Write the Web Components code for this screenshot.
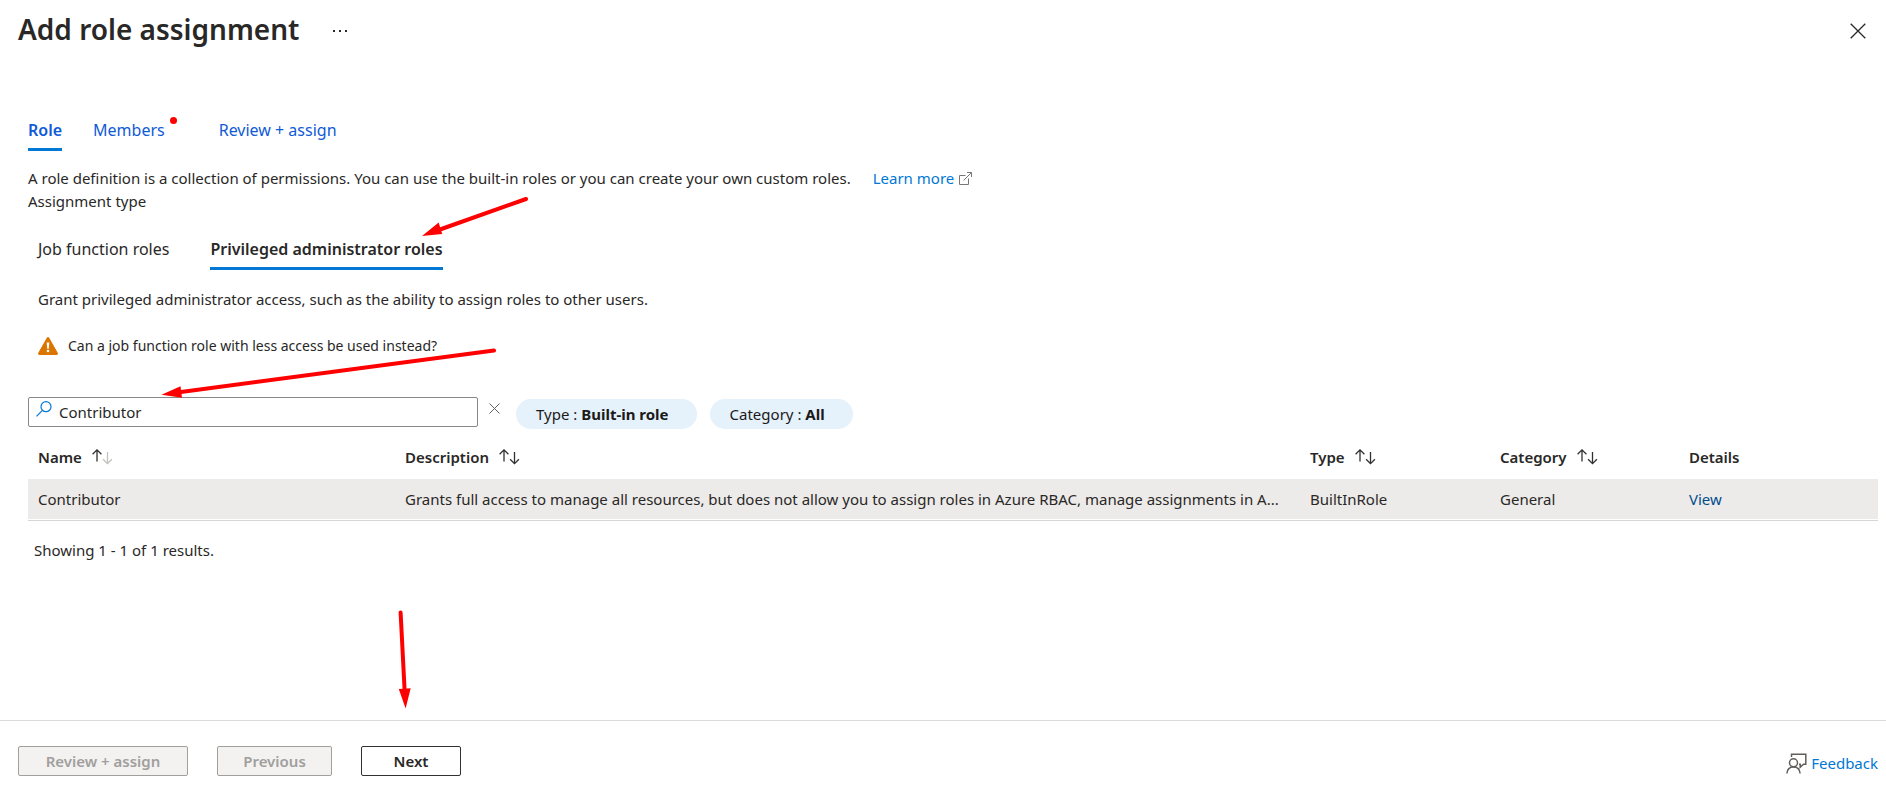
<!DOCTYPE html>
<html lang="en">
<head>
<meta charset="utf-8">
<title>Add role assignment</title>
<style>
  body { margin: 0; background: #fff; color: #292827; font: 15px/23px "Noto Sans", "Open Sans", sans-serif; }
</style>
</head>
<body>
<role-page></role-page>
<script>
const define = (name, html, setup) => {
  const template = document.createElement('template');
  template.innerHTML = html;
  customElements.define(name, class extends HTMLElement {
    connectedCallback() {
      if (this.shadowRoot) return;
      const root = this.attachShadow({ mode: 'open' });
      root.append(template.content.cloneNode(true));
      if (setup) setup(this, root);
    }
  });
};

define('page-header', `
  <style>
    :host { display: flex; align-items: center; height: 58px; padding: 0 20px 0 18px; }
    h1 { margin: 0; font-size: 28px; line-height: 40px; font-weight: 600; }
    button { display: flex; align-items: center; justify-content: center; padding: 4px 0 0; border: 0; background: none; color: inherit; }
    .more { margin-left: 32px; }
    .close { margin-left: auto; }
  </style>
  <h1><slot></slot></h1>
  <button class="more" type="button" aria-label="More options">
    <svg width="18" height="4" fill="currentColor"><path d="M2 1h2v2h-2zM8 1h2v2h-2zM14 1h2v2h-2z"/></svg>
  </button>
  <button class="close" type="button" aria-label="Close">
    <svg width="16" height="16" stroke="currentColor" stroke-width="1.3"><path d="M.7 .7l14.6 14.6M15.300 .7L.7 15.300"/></svg>
  </button>`);

define('tab-bar', `
  <style>
    :host { display: flex; gap: var(--tab-gap, 31px); }
  </style>
  <slot></slot>`, host => host.setAttribute('role', 'tablist'));

define('tab-item', `
  <style>
    :host { display: block; }
    :host([alert]) { padding-right: 23px; }
    button { position: relative; display: block; box-sizing: border-box; height: 34px; padding: 0 0 5px; border: 0; border-bottom: 3px solid transparent;
      background: none; color: var(--tab-color, #0f5bd6); font: 16px/26px "Noto Sans", "Open Sans", sans-serif; white-space: nowrap; }
    :host([selected]) button { font-weight: 600; border-bottom-color: #0078d4; }
    i { display: none; }
    :host([alert]) i { display: block; position: absolute; top: 0; right: -12px; width: 7px; height: 7px; border-radius: 50%; background: #f00; }
  </style>
  <button type="button" role="tab"><slot></slot><i></i></button>`, (host, root) => {
    root.querySelector('button').setAttribute('aria-selected', host.hasAttribute('selected'));
  });

define('warning-note', `
  <style>
    :host { display: flex; align-items: center; gap: 10px; font-size: 14px; line-height: 22px; }
    svg { flex: none; }
  </style>
  <svg width="20" height="18" viewBox="0 0 20 18">
    <path fill="#db7500" d="M8.800 .8a1.400 1.400 0 0 1 2.400 0l8.500 15a1.400 1.400 0 0 1-1.200 2.200H1.500a1.400 1.400 0 0 1-1.200-2.200z"/>
    <path fill="#fff" d="M8.700 5.500h2.600l-.5 6.300H9.200z"/><circle cx="10" cy="14" r="1.300" fill="#fff"/>
  </svg>
  <span><slot></slot></span>`);

define('search-box', `
  <style>
    :host { display: flex; align-items: flex-start; }
    label { display: flex; align-items: flex-start; box-sizing: border-box; width: 450px; height: 30px; padding: 0 7px; border: 1px solid #8a8886; border-radius: 2px; gap: 7px; }
    svg { flex: none; }
    label svg { margin-top: 3px; }
    input { flex: 1; min-width: 0; height: 28px; padding: 0; border: 0; outline: 0; background: none; color: inherit; font: inherit; }
    button { display: flex; align-items: center; justify-content: center; width: 32px; height: 22px; padding: 0; border: 0; background: none; color: #605e5c; }
  </style>
  <label>
    <svg width="16" height="16" viewBox="0 0 16 16" fill="none" stroke="#0078d4" stroke-width="1.200"><circle cx="10" cy="5.700" r="5"/><path d="M6.400 9.300L.5 15.300"/></svg>
    <input type="text" aria-label="Search roles">
  </label>
  <button type="button" aria-label="Clear search"><svg width="11" height="11" stroke="currentColor"><path d="M.5 .5l10 10M10.500 .5l-10 10"/></svg></button>`, (host, root) => {
    const input = root.querySelector('input');
    input.value = host.getAttribute('value') || '';
    root.querySelector('button').onclick = () => { input.value = ''; input.focus(); };
  });

define('filter-pill', `
  <style>
    :host { display: block; }
    button { height: 30px; padding: 0 28px 0 20px; border: 0; border-radius: 15px; background: #e5f1fb; color: #1b1a19; font: inherit; white-space: nowrap; }
    b { font-weight: 700; }
  </style>
  <button type="button"><slot name="label"></slot> : <b><slot></slot></b></button>`);

define('sort-icon', `
  <style>
    :host { display: block; --down: #323130; }
    :host([ascending]) { --down: #c3c1bf; }
    svg { display: block; }
  </style>
  <svg width="21" height="16" viewBox="0 0 21 16" fill="none" stroke-width="1.300">
    <path stroke="#323130" d="M5 12.500V1M.6 5.300L5 .9l4.400 4.400"/>
    <path style="stroke:var(--down)" d="M15.500 3v11.500M11.100 10.200l4.400 4.400 4.400-4.400"/>
  </svg>`);

define('roles-table', `
  <style>
    :host { display: block; }
    table { width: 100%; table-layout: fixed; border-collapse: collapse; }
    th, td { box-sizing: border-box; padding: 0 0 0 10px; text-align: left; white-space: nowrap; overflow: hidden; text-overflow: ellipsis; }
    th { height: 44px; font-weight: 600; }
    th button { display: flex; align-items: center; gap: 10px; padding: 0; border: 0; background: none; color: inherit; font: inherit; }
    td { height: 40px; background: #edebe9; }
    tbody { border-bottom: 1px solid #d8d6d4; }
    .gap td { height: 1px; background: none; }
    .name { width: 367px; } .type { width: 190px; } .category { width: 189px; } .details { width: 199px; }
    a { color: #004e8c; text-decoration: none; }
  </style>
  <table>
    <thead><tr>
      <th class="name" aria-sort="ascending"><button type="button">Name <sort-icon ascending></sort-icon></button></th>
      <th><button type="button">Description <sort-icon></sort-icon></button></th>
      <th class="type"><button type="button">Type <sort-icon></sort-icon></button></th>
      <th class="category"><button type="button">Category <sort-icon></sort-icon></button></th>
      <th class="details">Details</th>
    </tr></thead>
    <tbody>
      <tr>
        <td>Contributor</td>
        <td>Grants full access to manage all resources, but does not allow you to assign roles in Azure RBAC, manage assignments in A...</td>
        <td>BuiltInRole</td>
        <td>General</td>
        <td><a href="#view">View</a></td>
      </tr>
      <tr class="gap" aria-hidden="true"><td colspan="5"></td></tr>
    </tbody>
  </table>`);

define('action-button', `
  <style>
    :host { display: block; }
    button { box-sizing: border-box; width: 100%; height: 30px; padding: 0; border: 1px solid #323130; border-radius: 2px; background: #fff; color: #292827; font: inherit; font-weight: 600; line-height: 22px; }
    button:disabled { background: #f3f2f1; border-color: #a19f9d; color: #a19f9d; }
  </style>
  <button type="button"><slot></slot></button>`, (host, root) => {
    root.querySelector('button').disabled = host.hasAttribute('disabled');
  });

define('page-footer', `
  <style>
    :host { display: flex; gap: 29px; padding: 25px 8px 10px 18px; border-top: 1px solid #dcdbda; }
    .wide { width: 170px; } .medium { width: 115px; } .small { width: 100px; }
    a { display: flex; align-items: center; align-self: flex-end; gap: 4px; height: 25px; margin-left: auto; color: #0078d4; text-decoration: none; }
  </style>
  <action-button class="wide" disabled>Review + assign</action-button>
  <action-button class="medium" disabled>Previous</action-button>
  <action-button class="small">Next</action-button>
  <a href="#feedback">
    <svg width="21" height="21" viewBox="0 0 21 21" fill="none" stroke="#605e5c" stroke-width="1.500"><path d="M5.500 4V1.200h14.300v10h-2.300l-3.300 3v-3h-1.200"/><circle cx="7.500" cy="9.800" r="4"/><path d="M.9 20.500c.3-4 3-6.500 6.600-6.500s6.300 2.500 6.600 6.500"/></svg>
    Feedback
  </a>`);

define('callout-arrows', `
  <style>
    :host { position: absolute; top: 0; left: 0; pointer-events: none; }
    svg { display: block; }
  </style>
  <svg width="540" height="720" viewBox="0 0 540 720" fill="#f00" stroke="#f00" stroke-width="4" stroke-linecap="round" aria-hidden="true">
    <path d="M526 199L440 229.500"/><path stroke="none" d="M422 236l16.700-13.500 3.500 11.500z"/>
    <path d="M494 350.500L181 392"/><path stroke="none" d="M161.500 394.700l19-8.500 1.500 11.500z"/>
    <path d="M400.600 612.500L404.600 690"/><path stroke="none" d="M405.600 708.500l-6.800-19.500 11.900-.7z"/>
  </svg>`);

define('role-page', `
  <style>
    :host { position: relative; display: flex; flex-direction: column; min-height: 100vh; }
    main { flex: 1; padding: 59px 8px 20px 28px; }
    p { margin: 0; }
    .intro { display: flex; gap: 22px; padding-top: 16px; }
    .learn { display: flex; align-items: center; gap: 5px; color: #0078d4; text-decoration: none; }
    .panel { padding: 23px 10px 0; }
    .sub { --tab-gap: 41px; --tab-color: #292827; }
    .grant { padding-top: 18px; }
    warning-note { margin-top: 24px; }
    .filters { display: flex; align-items: flex-start; gap: 6px; margin-top: 40px; }
    .pills { display: flex; gap: 13px; padding-top: 2px; }
    .count { padding: 18px 6px 0; }
    roles-table { margin-top: 6px; }
  </style>
  <page-header>Add role assignment</page-header>
  <main>
    <tab-bar>
      <tab-item selected>Role</tab-item>
      <tab-item alert>Members</tab-item>
      <tab-item>Review + assign</tab-item>
    </tab-bar>
    <p class="intro">
      <span>A role definition is a collection of permissions. You can use the built-in roles or you can create your own custom roles.</span>
      <a class="learn" href="#learn">Learn more
        <svg width="13" height="13" fill="none" stroke="#797775"><path d="M6.500 3.500h-6v9h9v-6M8 .5h4.500V5M12.500 .5L4.500 8.500"/></svg></a>
    </p>
    <p>Assignment type</p>
    <div class="panel">
      <tab-bar class="sub">
        <tab-item>Job function roles</tab-item>
        <tab-item selected>Privileged administrator roles</tab-item>
      </tab-bar>
      <p class="grant">Grant privileged administrator access, such as the ability to assign roles to other users.</p>
      <warning-note>Can a job function role with less access be used instead?</warning-note>
    </div>
    <div class="filters">
      <search-box value="Contributor"></search-box>
      <div class="pills">
        <filter-pill><span slot="label">Type</span>Built-in role</filter-pill>
        <filter-pill><span slot="label">Category</span>All</filter-pill>
      </div>
    </div>
    <roles-table></roles-table>
    <p class="count">Showing 1 - 1 of 1 results.</p>
  </main>
  <page-footer></page-footer>
  <callout-arrows></callout-arrows>`);
</script>
</body>
</html>
